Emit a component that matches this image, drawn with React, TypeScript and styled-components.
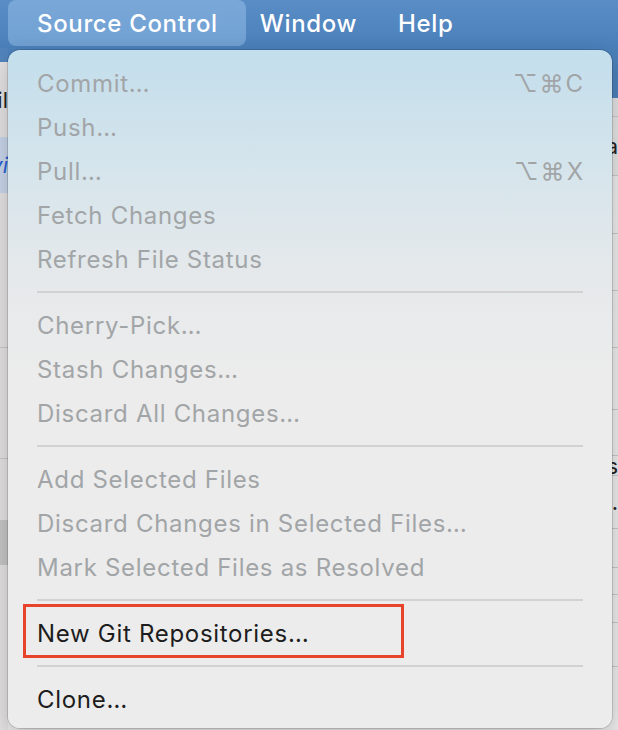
import { FC } from 'react'
import styled, { createGlobalStyle } from 'styled-components'

const GlobalStyle = createGlobalStyle`
  html, body {
    margin: 0;
    padding: 0;
    width: 618px;
    height: 730px;
    overflow: hidden;
    background: #ebebeb;
  }
  * {
    box-sizing: border-box;
  }
`

const Screen = styled.div(() => `
  position: relative;
  width: 618px;
  height: 730px;
  overflow: hidden;
  font-family: Inter, "DejaVu Sans", sans-serif;
`)

const MenuBar = styled.div(() => `
  display: flex;
  align-items: stretch;
  height: 48px;
  padding-left: 8px;
  background: linear-gradient(180deg, #5a8dc6 0%, #4a80ba 100%);
`)

const MenuTitle = styled.div<{ $active?: boolean; $pad: string }>((props) => `
  display: flex;
  align-items: center;
  height: 46px;
  padding: ${props.$pad};
  border-radius: 8px;
  color: #fff;
  font-size: 24px;
  font-weight: 500;
  letter-spacing: 0.65px;
  white-space: nowrap;
  background: ${props.$active ? 'rgba(160, 200, 240, 0.45)' : 'transparent'};
`)

const Backdrop = styled.div(() => `
  display: flex;
  height: 682px;
`)

const Sidebar = styled.div(() => `
  display: flex;
  flex-direction: column;
  width: 8px;
  background: #e4e2e2;
`)

const Content = styled.div(() => `
  display: flex;
  flex: 1;
  flex-direction: column;
  background: #ececec;
`)

const Strip = styled.div<{ $h: number; $bg?: string; $line?: boolean }>((props) => `
  display: flex;
  align-items: center;
  justify-content: flex-end;
  flex-shrink: 0;
  height: ${props.$h}px;
  background: ${props.$bg || 'transparent'};
  border-bottom: ${props.$line ? '1px solid #c9c9c9' : 'none'};
  font-size: 22px;
  color: #222;
  overflow: hidden;
`)

const Menu = styled.div(() => `
  position: absolute;
  left: 8px;
  top: 50px;
  width: 604px;
  height: 678px;
  padding-top: 11px;
  border-radius: 12px;
  background: linear-gradient(180deg, #c3deec 0%, #d6e5ec 18%, #e6e9eb 34%, #ececec 48%, #ececec 100%);
  box-shadow: 0 0 0 1px rgba(0, 0, 0, 0.14), 0 8px 24px rgba(0, 0, 0, 0.22);
`)

const Item = styled.div<{ $enabled?: boolean }>((props) => `
  position: relative;
  display: flex;
  align-items: center;
  justify-content: space-between;
  height: 44px;
  padding: 0 29px 0 29px;
  font-size: 24px;
  letter-spacing: 0.7px;
  white-space: nowrap;
  color: ${props.$enabled ? '#1d1d1d' : '#a2a5a7'};
`)

const Shortcut = styled.span(() => `
  margin-right: -2px;
  letter-spacing: 2px;
  color: #a2a5a7;
`)

const Separator = styled.div(() => `
  height: 22px;
  margin: 0 29px;
  display: flex;
  align-items: center;
  &::before {
    content: '';
    flex: 1;
    height: 2px;
    background: #d2d2d2;
  }
`)

const Callout = styled.span(() => `
  position: absolute;
  left: 15px;
  top: -7px;
  width: 381px;
  height: 54px;
  border: 3px solid #e8442b;
  pointer-events: none;
`)

type Entry = { label: string; shortcut?: string; enabled?: boolean; marked?: boolean } | 'sep'

const entries: Entry[] = [
  { label: 'Commit…', shortcut: '⌥⌘C' },
  { label: 'Push…' },
  { label: 'Pull…', shortcut: '⌥⌘X' },
  { label: 'Fetch Changes' },
  { label: 'Refresh File Status' },
  'sep',
  { label: 'Cherry-Pick…' },
  { label: 'Stash Changes…' },
  { label: 'Discard All Changes…' },
  'sep',
  { label: 'Add Selected Files' },
  { label: 'Discard Changes in Selected Files…' },
  { label: 'Mark Selected Files as Resolved' },
  'sep',
  { label: 'New Git Repositories…', enabled: true, marked: true },
  'sep',
  { label: 'Clone…', enabled: true },
]

const App: FC = () => {
  return (
    <Screen>
      <GlobalStyle />
      <MenuBar>
        <MenuTitle $active $pad="0 28px 0 29px">Source Control</MenuTitle>
        <MenuTitle $pad="0 22px 0 14px">Window</MenuTitle>
        <MenuTitle $pad="0 20px 0 19px">Help</MenuTitle>
      </MenuBar>

      <Backdrop>
        <Sidebar>
          <Strip $h={14} $bg="#5284bd" />
          <Strip $h={75}>il</Strip>
          <Strip $h={56} $bg="#c8d6ea" style={{ color: '#2a62d8', fontStyle: 'italic' }}>vi</Strip>
          <Strip $h={155} $line />
          <Strip $h={111} $line />
          <Strip $h={61} />
          <Strip $h={45} $bg="#c6c6c6" />
          <Strip $h={165} />
        </Sidebar>
        <Content>
          <Strip $h={50} $bg="#4c81ba" />
          <Strip $h={19} $bg="#e2e2e2" $line />
          <Strip $h={59} $bg="#e4e4e4" $line>a</Strip>
          <Strip $h={58} $line />
          <Strip $h={57} $line />
          <Strip $h={57} $line />
          <Strip $h={62} $line />
          <Strip $h={46} $line />
          <Strip $h={20} $line>s</Strip>
          <Strip $h={53} $line>.</Strip>
          <Strip $h={39} $line />
          <Strip $h={27} $line />
          <Strip $h={28} $line />
          <Strip $h={44} $line />
          <Strip $h={63} />
        </Content>
      </Backdrop>

      <Menu>
        {entries.map((entry, i) =>
          entry === 'sep'
            ? <Separator key={i} />
            : (
              <Item key={i} $enabled={entry.enabled}>
                <span>{entry.label}</span>
                {entry.shortcut && <Shortcut>{entry.shortcut}</Shortcut>}
                {entry.marked && <Callout />}
              </Item>
            )
        )}
      </Menu>
    </Screen>
  )
}

export default App
